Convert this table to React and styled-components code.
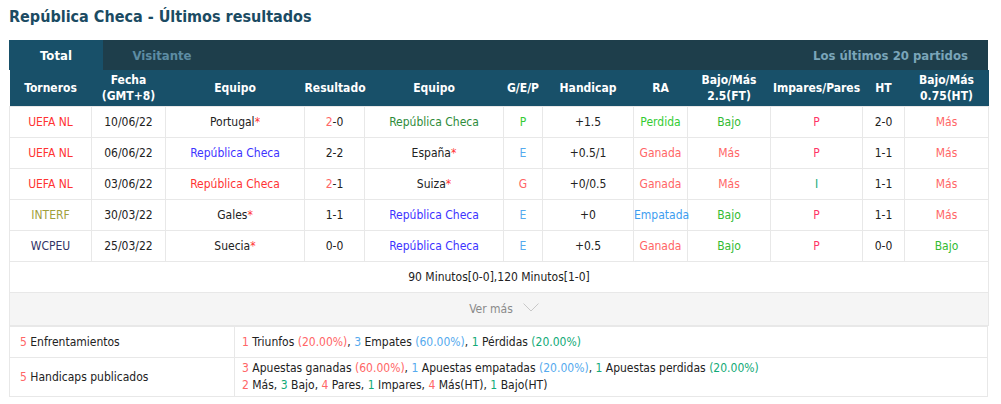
import React from 'react'
import styled, { createGlobalStyle } from 'styled-components';

const GlobalStyle = createGlobalStyle`
    body {
        margin: 0;
        background: #fff;
        font-family: Tahoma, "DejaVu Sans Condensed", "DejaVu Sans", sans-serif;
        font-size: 12px;
        color: #222;
    }
`;

const C = {
    red: '#ff3333',
    olive: '#a0a03c',
    navy: '#333366',
    green: '#2e8b3a',
    blue: '#3d33ff',
    lightRed: '#ff6666',
    win: '#33cc33',
    draw: '#3d9df0',
    sky: '#55aaee',
    bajo: '#33bb33',
    pink: '#ff3366',
    teal: '#11aa77'
};

const columns = [82, 74, 139, 60, 139, 39, 91, 54, 83, 92, 42, 84];

const headers = [
    'Torneros', <>Fecha<br />(GMT+8)</>, 'Equipo', 'Resultado', 'Equipo', 'G/E/P',
    'Handicap', 'RA', <>Bajo/Más<br />2.5(FT)</>, 'Impares/Pares', 'HT', <>Bajo/Más<br />0.75(HT)</>
];

const matches = [
    {
        league: ['UEFA NL', C.red], date: '10/06/22',
        home: ['Portugal', '#222', true], score: ['2', '-0'], away: ['República Checa', C.green, false],
        res: ['P', C.win], hcp: '+1.5', ra: ['Perdida', C.win], bm: ['Bajo', C.bajo],
        ip: ['P', C.pink], ht: '2-0', bmht: ['Más', C.lightRed]
    },
    {
        league: ['UEFA NL', C.red], date: '06/06/22',
        home: ['República Checa', C.blue, false], score: [null, '2-2'], away: ['España', '#222', true],
        res: ['E', C.sky], hcp: '+0.5/1', ra: ['Ganada', C.lightRed], bm: ['Más', C.lightRed],
        ip: ['P', C.pink], ht: '1-1', bmht: ['Más', C.lightRed]
    },
    {
        league: ['UEFA NL', C.red], date: '03/06/22',
        home: ['República Checa', C.red, false], score: ['2', '-1'], away: ['Suiza', '#222', true],
        res: ['G', C.lightRed], hcp: '+0/0.5', ra: ['Ganada', C.lightRed], bm: ['Más', C.lightRed],
        ip: ['I', C.teal], ht: '1-1', bmht: ['Más', C.lightRed]
    },
    {
        league: ['INTERF', C.olive], date: '30/03/22',
        home: ['Gales', '#222', true], score: [null, '1-1'], away: ['República Checa', C.blue, false],
        res: ['E', C.sky], hcp: '+0', ra: ['Empatada', C.draw], bm: ['Bajo', C.bajo],
        ip: ['P', C.pink], ht: '1-1', bmht: ['Más', C.lightRed]
    },
    {
        league: ['WCPEU', C.navy], date: '25/03/22',
        home: ['Suecia', '#222', true], score: [null, '0-0'], away: ['República Checa', C.blue, false],
        res: ['E', C.sky], hcp: '+0.5', ra: ['Ganada', C.lightRed], bm: ['Bajo', C.bajo],
        ip: ['P', C.pink], ht: '0-0', bmht: ['Bajo', C.bajo]
    }
];

const Team = ({ data }) => {
    const [name, color, star] = data;
    return (
        <Tx $c={color}>{name}{star && <Star>*</Star>}</Tx>
    );
};

const N = ({ c, children }) => <Tx $c={c}>{children}</Tx>;

const App = () => {
    return (
        <Page>
            <GlobalStyle />
            <Title>República Checa - Últimos resultados</Title>
            <Panel>
                <TabBar>
                    <Tab $active $w={94}>Total</Tab>
                    <Tab $w={118}>Visitante</Tab>
                    <TabInfo>Los últimos 20 partidos</TabInfo>
                </TabBar>
                <Table>
                    <colgroup>
                        {columns.map((w, i) => <col key={i} style={{ width: w }} />)}
                    </colgroup>
                    <thead>
                        <tr>
                            {headers.map((h, i) => <HeadCell key={i}>{h}</HeadCell>)}
                        </tr>
                    </thead>
                    <tbody>
                        {matches.map((m, i) => (
                            <tr key={i}>
                                <Cell><Tx $c={m.league[1]}>{m.league[0]}</Tx></Cell>
                                <Cell>{m.date}</Cell>
                                <Cell><Team data={m.home} /></Cell>
                                <Cell>{m.score[0] && <Tx $c={C.lightRed}>{m.score[0]}</Tx>}{m.score[1]}</Cell>
                                <Cell><Team data={m.away} /></Cell>
                                <Cell><Tx $c={m.res[1]}>{m.res[0]}</Tx></Cell>
                                <Cell>{m.hcp}</Cell>
                                <Cell $tight><Tx $c={m.ra[1]}>{m.ra[0]}</Tx></Cell>
                                <Cell><Tx $c={m.bm[1]}>{m.bm[0]}</Tx></Cell>
                                <Cell><Tx $c={m.ip[1]}>{m.ip[0]}</Tx></Cell>
                                <Cell>{m.ht}</Cell>
                                <Cell><Tx $c={m.bmht[1]}>{m.bmht[0]}</Tx></Cell>
                            </tr>
                        ))}
                        <tr>
                            <Cell colSpan={12}>90 Minutos[0-0],120 Minutos[1-0]</Cell>
                        </tr>
                        <tr>
                            <MoreCell colSpan={12}>
                                <MoreText>Ver más</MoreText>
                                <Chevron width="16" height="9" viewBox="0 0 16 9">
                                    <path d="M0.5 0.5 L8 8 L15.5 0.5" fill="none" stroke="#c8c8c8" strokeWidth="1" />
                                </Chevron>
                            </MoreCell>
                        </tr>
                    </tbody>
                </Table>
                <Summary>
                    <colgroup>
                        <col style={{ width: 225 }} />
                        <col />
                    </colgroup>
                    <tbody>
                        <tr>
                            <SumLabel><N c={C.lightRed}>5</N> Enfrentamientos</SumLabel>
                            <SumText>
                                <N c={C.lightRed}>1</N> Triunfos <N c={C.lightRed}>(20.00%)</N>, <N c={C.sky}>3</N> Empates <N c={C.sky}>(60.00%)</N>, <N c={C.teal}>1</N> Pérdidas <N c={C.teal}>(20.00%)</N>
                            </SumText>
                        </tr>
                        <tr>
                            <SumLabel $tall><N c={C.lightRed}>5</N> Handicaps publicados</SumLabel>
                            <SumText $tall>
                                <Line>
                                    <N c={C.lightRed}>3</N> Apuestas ganadas <N c={C.lightRed}>(60.00%)</N>, <N c={C.sky}>1</N> Apuestas empatadas <N c={C.sky}>(20.00%)</N>, <N c={C.teal}>1</N> Apuestas perdidas <N c={C.teal}>(20.00%)</N>
                                </Line>
                                <Line>
                                    <N c={C.lightRed}>2</N> Más, <N c={C.teal}>3</N> Bajo, <N c={C.lightRed}>4</N> Pares, <N c={C.teal}>1</N> Impares, <N c={C.lightRed}>4</N> Más(HT), <N c={C.teal}>1</N> Bajo(HT)
                                </Line>
                            </SumText>
                        </tr>
                    </tbody>
                </Summary>
            </Panel>
        </Page>
    )
}

export default App;

const Page = styled.div`
    padding: 5px 13px 0 9px;
`;
const Title = styled.h2`
    margin: 0 0 9px;
    height: 26px;
    line-height: 24px;
    font-size: 16px;
    font-weight: bold;
    color: #1b4b63;
`;
const Panel = styled.div`
    width: 979px;
`;
const TabBar = styled.div`
    display: flex;
    align-items: center;
    height: 30px;
    background: #1e3e4b;
    font-weight: bold;
    font-size: 13px;
`;
const Tab = styled.div`
    width: ${(props) => props.$w}px;
    height: 100%;
    display: flex;
    align-items: center;
    justify-content: center;
    color: ${(props) => props.$active ? '#fff' : '#5d8ca3'};
    background: ${(props) => props.$active ? '#185069' : 'transparent'};
`;
const TabInfo = styled.div`
    margin-left: auto;
    padding-right: 20px;
    color: #7aa5b9;
`;
const Table = styled.table`
    width: 979px;
    table-layout: fixed;
    border-collapse: collapse;
`;
const HeadCell = styled.th`
    height: 36px;
    padding: 0;
    background: #185069;
    color: #fff;
    font-weight: bold;
    font-size: 12px;
    line-height: 16px;
    text-align: center;
`;
const Cell = styled.td`
    height: 30px;
    padding: 0;
    border: 1px solid #e8e8e8;
    text-align: center;
    white-space: nowrap;
    color: #222;
    overflow: ${(props) => props.$tight ? 'visible' : 'hidden'};
`;
const MoreCell = styled.td`
    height: 32px;
    padding: 0;
    border: 1px solid #e8e8e8;
    background: #f5f5f5;
    text-align: center;
    color: #8a8a8a;
`;
const MoreText = styled.span`
    margin-left: 10px;
`;
const Chevron = styled.svg`
    margin-left: 10px;
    vertical-align: 1px;
`;
const Tx = styled.span`
    color: ${(props) => props.$c};
`;
const Star = styled.span`
    color: #ff3333;
`;
const Summary = styled.table`
    width: 979px;
    table-layout: fixed;
    border-collapse: collapse;
`;
const SumLabel = styled.td`
    height: ${(props) => props.$tall ? '36px' : '30px'};
    padding: 0 0 0 10px;
    border: 1px solid #e8e8e8;
    color: #222;
`;
const SumText = styled.td`
    padding: ${(props) => props.$tall ? '2px 0 2px 7px' : '0 0 0 7px'};
    border: 1px solid #e8e8e8;
    color: #222;
`;
const Line = styled.div`
    line-height: 17px;
`;
